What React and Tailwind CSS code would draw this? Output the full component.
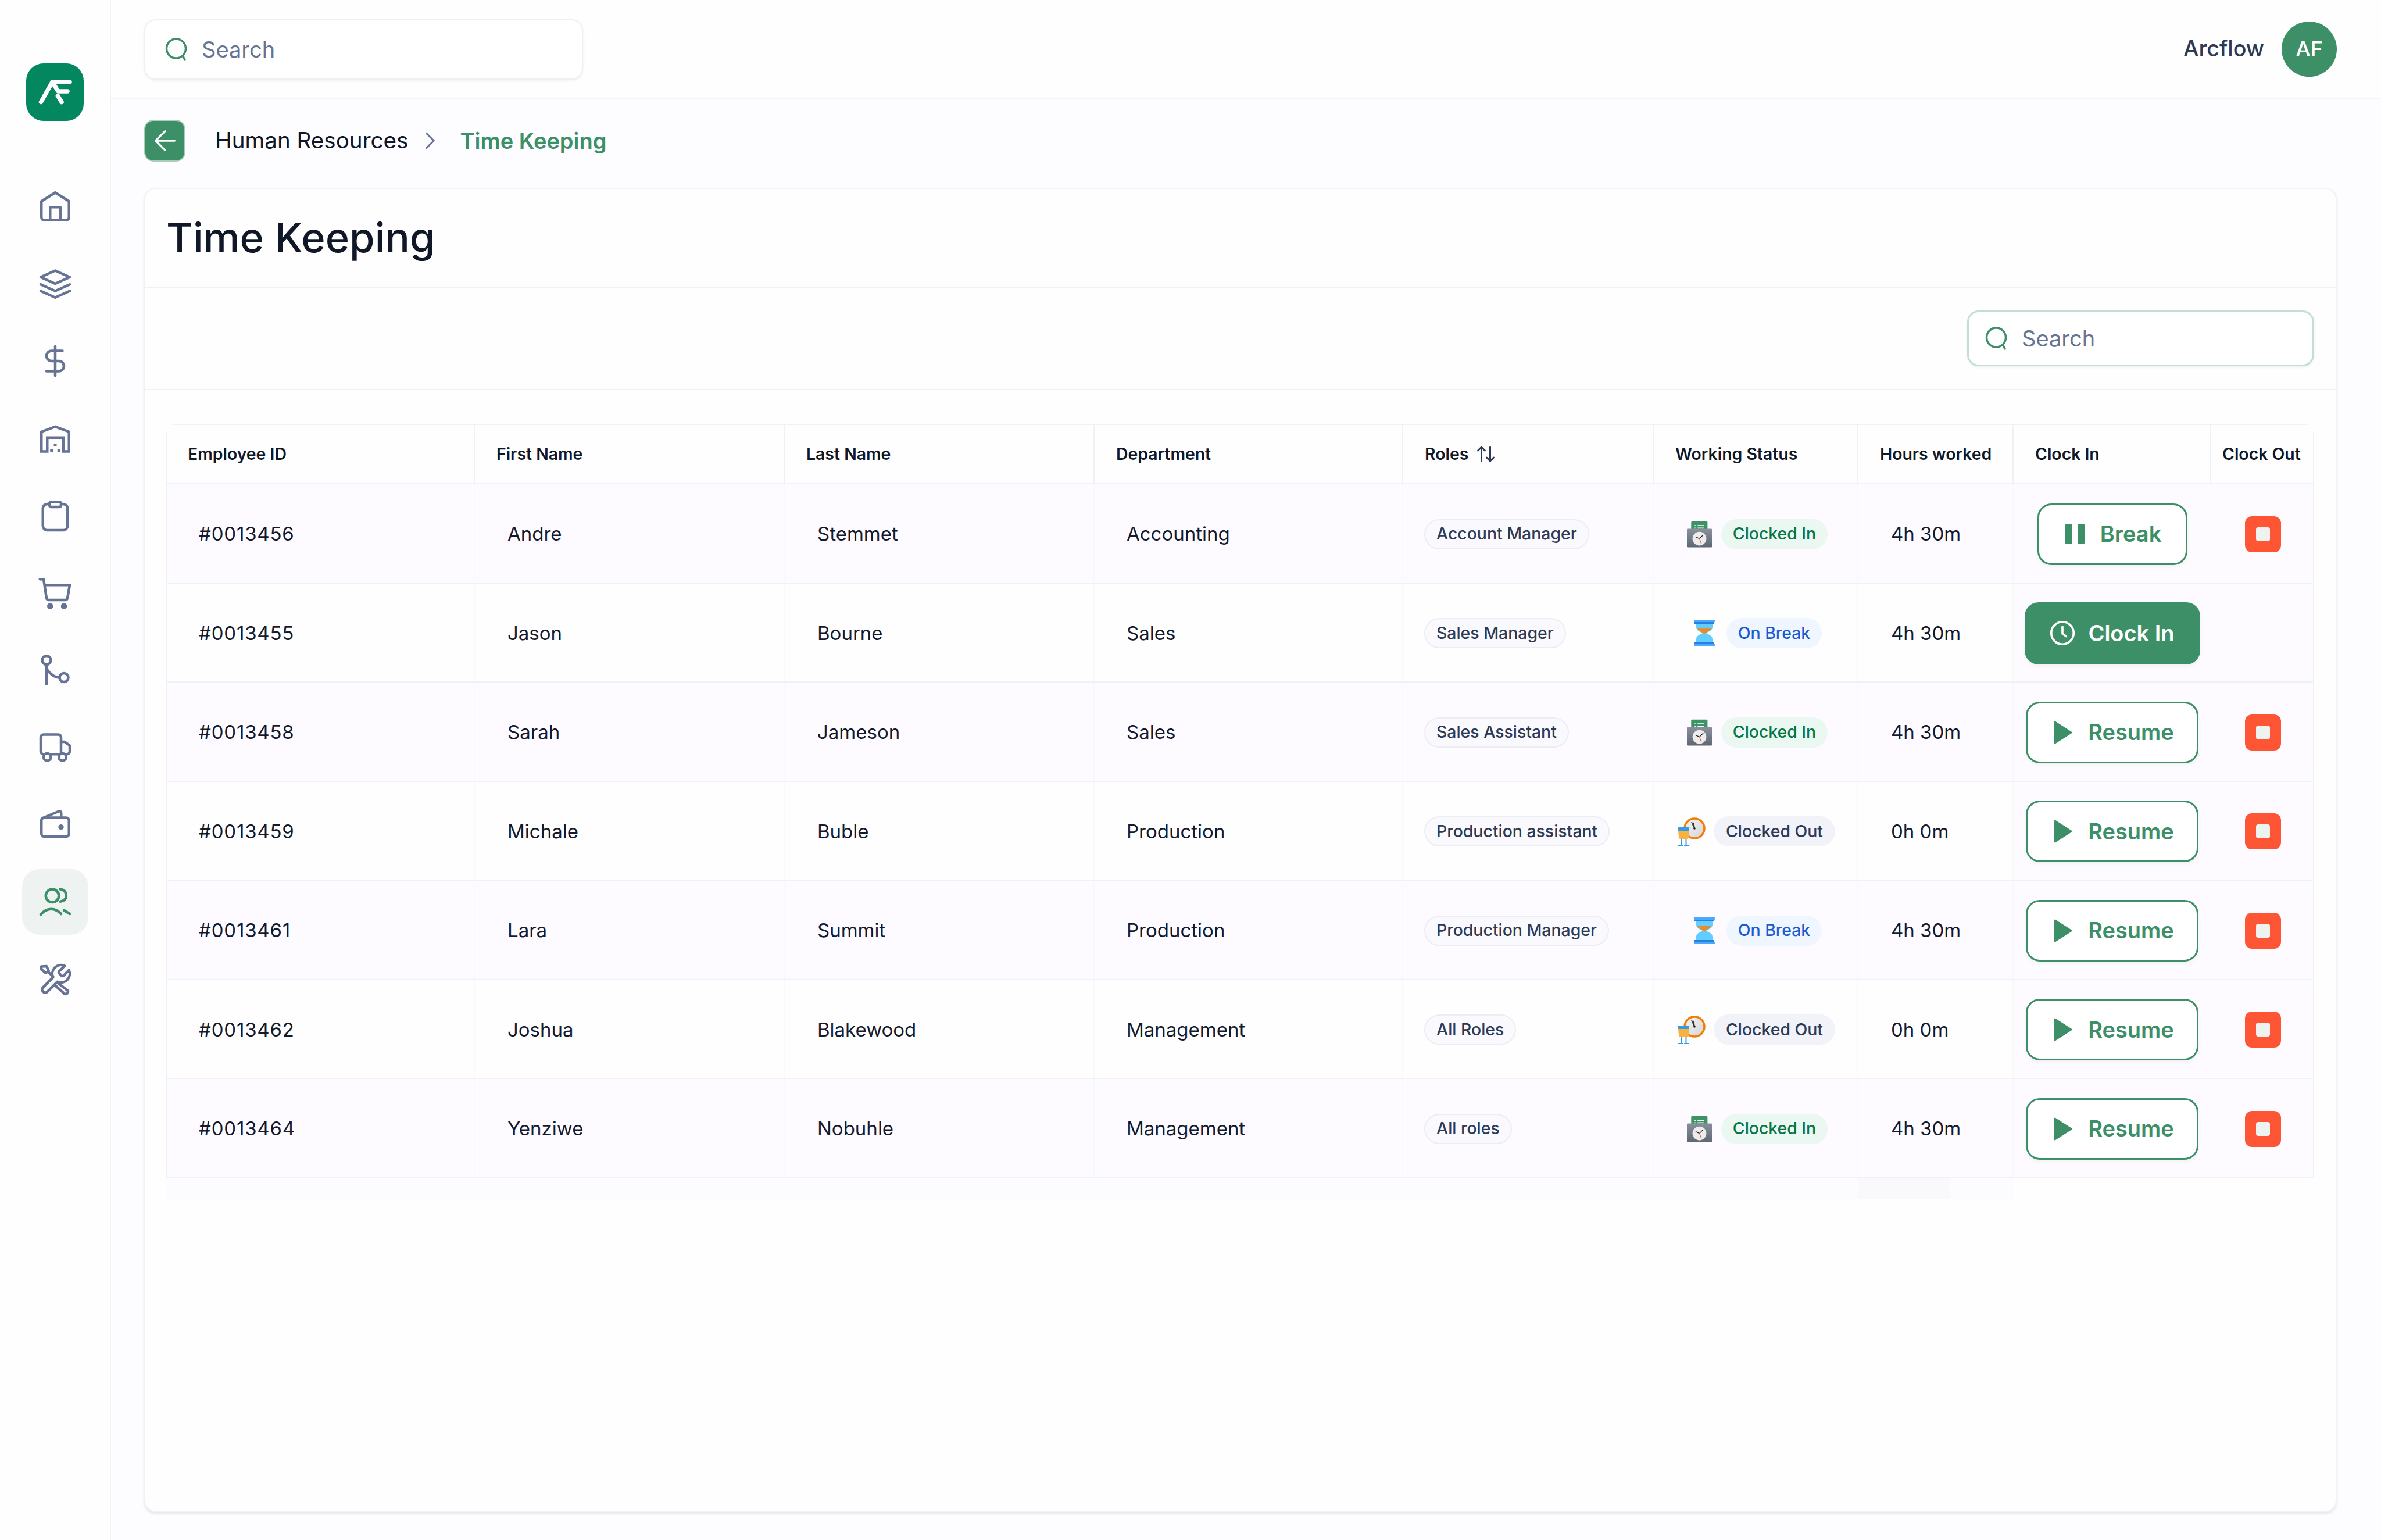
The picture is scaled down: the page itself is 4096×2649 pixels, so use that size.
import React from "react";
import { ArrowLeft, ChevronRight, ArrowUpDown, DollarSign } from "lucide-react";

const S = ({ children, cls = "text-[#667394]", w = 60, sw = 1.8 }) => (
  <svg width={w} height={w} viewBox="0 0 24 24" fill="none" stroke="currentColor" strokeWidth={sw} strokeLinecap="round" strokeLinejoin="round" className={cls}>{children}</svg>
);

const navIcons = [
  <S key="h"><path d="M2.5 8.5 L12 2.5 L21.5 8.5 V19.5 a2 2 0 0 1 -2 2 H4.5 a2 2 0 0 1 -2 -2 Z" /><path d="M8.5 21.5 V12.5 h7 V21.5" /></S>,
  <S key="l"><path d="M2 7.5 L12 3 L22 7.5 L12 12 Z" /><path d="M2 12.5 L12 17 L22 12.5" /><path d="M2 17 L12 21.5 L22 17" /></S>,
  <DollarSign key="d" size={60} strokeWidth={1.8} className="text-[#667394]" />,
  <S key="w"><path d="M2.5 21 V7.5 L12 4 L21.5 7.5 V21 H17.5 V11.5 H6.5 V21 Z" strokeLinejoin="miter" strokeLinecap="butt" /><path d="M11 16.5 h2 M8.5 20.5 h2 M13.5 20.5 h2" strokeLinecap="butt" strokeWidth="1.8" /></S>,
  <S key="c"><rect x="8" y="2.5" width="8" height="3.5" rx="1.2" /><path d="M8 4 H6.5 a3 3 0 0 0 -3 3 V19 a3 3 0 0 0 3 3 H17.5 a3 3 0 0 0 3 -3 V7 a3 3 0 0 0 -3 -3 H16" /></S>,
  <S key="s"><path d="M1.5 2.5 H4 L6 15.5 a1.5 1.5 0 0 0 1.5 1.3 H19 a1.5 1.5 0 0 0 1.4 -1.1 L22 6.5 H4.7" /><circle cx="8.5" cy="21" r="1.2" fill="currentColor" /><circle cx="18" cy="21" r="1.2" fill="currentColor" /></S>,
  <S key="r"><circle cx="6" cy="5" r="3" /><path d="M6 8 V21.5" /><path d="M6 11 C8.5 14.5 11.5 17 15 17" /><circle cx="18" cy="17" r="3" /></S>,
  <S key="t"><path d="M16 16.5 H4 a2 2 0 0 1 -2 -2 V5 a2 2 0 0 1 2 -2 H14 a2 2 0 0 1 2 2 Z" /><path d="M16 8 H18.5 L22 10.5 V14.5 a2 2 0 0 1 -2 2 H16" /><circle cx="6.5" cy="18.5" r="2.5" fill="#fff" /><circle cx="17" cy="18.5" r="2.5" fill="#fff" /></S>,
  <S key="wa"><rect x="2.5" y="7" width="19" height="13" rx="2" /><path d="M2.8 7.5 L14.5 2.6 a1.2 1.2 0 0 1 1.6 1.1 V7" /><circle cx="16" cy="13.5" r="1" fill="currentColor" /></S>,
  <S key="u" cls="text-[#3c8f66]"><circle cx="10" cy="7.5" r="4.5" /><path d="M2 20.5 C6 15.5 12 15.5 16 20" /><path d="M15.5 3 C18.5 3.5 19.5 5 19.5 7.5 C19.5 9.5 18.5 11 15.5 11.5" /><path d="M18 17.5 L22 20" /></S>,
  <S key="x"><path d="M14.7 6.3a1 1 0 0 0 0 1.4l1.6 1.6a1 1 0 0 0 1.4 0l3.77-3.77a6 6 0 0 1-7.94 7.94l-6.91 6.91a2.12 2.12 0 0 1-3-3l6.91-6.91a6 6 0 0 1 7.94-7.94l-3.76 3.76z" /><path d="M7 6.5 L10.5 10 M2.5 3 L6 2.8 L7.5 6 L5.5 7.5 L2.5 5 Z M14 14.5 L20.5 19.5 a1.6 1.6 0 0 1 -2.2 2.2 L12.5 16.5" /></S>,
];

const SearchIcon = () => (
  <svg width="39" height="40" viewBox="0 0 39 40" fill="none" stroke="#3c8f66" strokeWidth="3.5" strokeLinecap="round" className="shrink-0">
    <circle cx="19" cy="18.5" r="16.5" /><path d="M30.5 31 L34 38" />
  </svg>
);

const Logo = () => (
  <svg width="99" height="99" viewBox="15 14 99 99" className="rounded-[30px] bg-[#03875f]" fill="none" stroke="#fff" strokeWidth="7.5" strokeLinecap="round" strokeLinejoin="round">
    <path d="M40.5 80.5 L60 46 H90" />
    <path d="M60 46 L70 62 H86" />
    <path d="M69.5 70 L76 80.5" />
  </svg>
);

const ClockInIcon = () => (
  <svg width="43" height="46" viewBox="0 0 130 138" className="shrink-0">
    <defs><linearGradient id="cg" x1="0" y1="0" x2="0" y2="1"><stop offset="0" stopColor="#8a919c" /><stop offset="1" stopColor="#5f6773" /></linearGradient></defs>
    <rect x="22" y="2" width="85" height="50" rx="5" fill="#3c9466" />
    <path d="M55 24 H88 M55 37 H88 M40 24 H45 M40 37 H45" stroke="#fff" strokeWidth="5" />
    <rect x="0" y="40" width="130" height="97" rx="4" fill="url(#cg)" />
    <circle cx="65" cy="92" r="36" fill="#ececec" />
    <path d="M65 92 L85 72 M65 92 L45 82" stroke="#222" strokeWidth="4" />
    <path d="M65 92 L75 118" stroke="#f0673a" strokeWidth="4" />
  </svg>
);

const HourIcon = () => (
  <svg width="36" height="46" viewBox="0 0 36 46" className="shrink-0">
    <path d="M4 5 H32 V13 C32 19 24 21 21 23 C24 25 32 27 32 33 V41 H4 V33 C4 27 12 25 15 23 C12 21 4 19 4 13 Z" fill="#62cdff" />
    <path d="M6 15 H30 C29 19 22 20 18 25 C14 20 7 19 6 15 Z" fill="#e88d2d" />
    <rect x="0" y="0" width="36" height="4" rx="1" fill="#4aa8ff" />
    <rect x="1" y="4" width="34" height="3" fill="#2b7fe0" />
    <rect x="1" y="39" width="34" height="3" fill="#2b7fe0" />
    <rect x="0" y="42" width="36" height="4" rx="1" fill="#4aa8ff" />
  </svg>
);

const OutIcon = () => (
  <svg width="48" height="49" viewBox="0 0 48 49" className="shrink-0">
    <defs><linearGradient id="og" x1="0" y1="0" x2="1" y2="1"><stop offset="0" stopColor="#f4f4f4" /><stop offset="1" stopColor="#d4d4d8" /></linearGradient></defs>
    <circle cx="29" cy="19" r="17" fill="url(#og)" stroke="#f57c00" strokeWidth="3.5" />
    <path d="M29 19 L24 8 M29 19 L27.5 9" stroke="#333" strokeWidth="1.8" />
    <circle cx="29" cy="19" r="1.8" fill="#111" />
    <rect x="1" y="17" width="19" height="6" rx="1" fill="#2f9bea" />
    <path d="M1 23 H20 L19 34 a3 3 0 0 1 -3 3 H5 a3 3 0 0 1 -3 -3 Z" fill="#fbb040" />
    <path d="M6.5 37 V47 M14.5 37 V47" stroke="#2f9bea" strokeWidth="2" />
    <path d="M1 48 H10 M11 48 H20" stroke="#2f9bea" strokeWidth="2" />
  </svg>
);

const cols = "grid-cols-[530px_533px_533px_531px_431px_352px_267px_339px_176px]";

const rows = [
  ["#0013456", "Andre", "Stemmet", "Accounting", "Account Manager", "in", "4h 30m", "break"],
  ["#0013455", "Jason", "Bourne", "Sales", "Sales Manager", "onbreak", "4h 30m", "clock"],
  ["#0013458", "Sarah", "Jameson", "Sales", "Sales Assistant", "in", "4h 30m", "resume"],
  ["#0013459", "Michale", "Buble", "Production", "Production assistant", "out", "0h 0m", "resume"],
  ["#0013461", "Lara", "Summit", "Production", "Production Manager", "onbreak", "4h 30m", "resume"],
  ["#0013462", "Joshua", "Blakewood", "Management", "All Roles", "out", "0h 0m", "resume"],
  ["#0013464", "Yenziwe", "Nobuhle", "Management", "All roles", "in", "4h 30m", "resume"],
];

const Status = ({ s }) => {
  if (s === "in") return (
    <div className="flex items-center gap-[16px] pl-[6px]"><ClockInIcon /><span className="flex h-[52px] items-center rounded-full bg-[#ebf8f2] px-[20px] text-[28.4px] font-medium text-[#067647]">Clocked In</span></div>
  );
  if (s === "onbreak") return (
    <div className="flex items-center gap-[20px] pl-[8px]"><HourIcon /><span className="flex h-[52px] items-center rounded-full bg-[#eff6ff] px-[20px] text-[28.4px] font-medium text-[#175cd3]">On Break</span></div>
  );
  return (
    <div className="flex items-center gap-[14px] pl-[3px]"><OutIcon /><span className="flex h-[52px] items-center rounded-full bg-[#f2f3f8] px-[21px] text-[28.4px] font-medium text-[#2d3a55]">Clocked Out</span></div>
  );
};

const Action = ({ a }) => {
  if (a === "break") return (
    <button className="flex h-[106px] w-[258px] items-center justify-center gap-[27px] rounded-[24px] border-[3px] border-[#3c8f66] bg-white pl-[4px] text-[38px] font-semibold text-[#3c8f66] shadow-[0_3px_6px_#f0f0f4]">
      <span className="flex gap-[9px]"><span className="h-[35px] w-[12px] rounded-[2px] bg-[#3c8f66]" /><span className="h-[35px] w-[12px] rounded-[2px] bg-[#3c8f66]" /></span>Break
    </button>
  );
  if (a === "clock") return (
    <button className="flex h-[107px] w-[302px] items-center justify-center gap-[22px] rounded-[24px] bg-[#3c8f66] text-[38px] font-semibold text-white shadow-[0_3px_6px_#f0f0f4]">
      <svg width="44" height="44" viewBox="0 0 24 24" fill="none" stroke="#fff" strokeWidth="2" strokeLinecap="round" strokeLinejoin="round"><circle cx="12" cy="12" r="10.5" /><path d="M12 6 V12.5 L15.5 15" /></svg>Clock In
    </button>
  );
  return (
    <button className="flex h-[106px] w-[297px] items-center justify-center gap-[27px] rounded-[24px] border-[3px] border-[#3c8f66] bg-white pl-[6px] text-[38px] font-semibold text-[#3c8f66] shadow-[0_3px_6px_#f0f0f4]">
      <svg width="32" height="40" viewBox="0 0 32 40"><path d="M2 2 L30 20 L2 38 Z" fill="#3c8f66" stroke="#3c8f66" strokeWidth="3" strokeLinejoin="round" /></svg>Resume
    </button>
  );
};

const Stop = () => (
  <button className="ml-[4px] flex h-[62px] w-[62px] items-center justify-center rounded-[12px] bg-[#fe5535]"><span className="h-[24px] w-[24px] rounded-[4px] bg-[#eef3f0]" /></button>
);

const Head = ({ children, last, pl = "pl-[37px]" }) => (
  <div className={`flex h-full items-center ${pl} text-[28.4px] font-semibold text-[#101828] ${last ? "" : "border-r-2 border-[#f0f0f6]"}`}>{children}</div>
);

export default function App() {
  return (
    <div className="flex h-[2649px] w-[4096px] bg-[#fdfcfe] text-[#101828] [font-family:Inter,sans-serif]">
      <aside className="flex w-[191px] shrink-0 flex-col items-center border-r-2 border-[#f3f2f8] bg-[#fefefe] pt-[109px]">
        <Logo />
        <nav className="mt-[90px] flex flex-col items-center gap-[20px]">
          {navIcons.map((ic, i) => (
            <div key={i} className={`flex h-[113px] w-[114px] items-center justify-center rounded-[30px] ${i === 9 ? "bg-[#eef3f2]" : ""}`}>{ic}</div>
          ))}
        </nav>
      </aside>
      <div className="flex min-w-0 flex-1 flex-col">
        <header className="flex h-[170px] shrink-0 items-center justify-between border-b-2 border-[#f5f4f8] bg-[#fefefe] pl-[57px] pr-[76px]">
          <div className="mt-[2px] flex h-[104px] w-[755px] items-center gap-[24px] rounded-[20px] border-2 border-[#eff0f4] bg-white pl-[34px] shadow-[0_2px_4px_#f0f0f4]">
            <SearchIcon /><span className="text-[38px] text-[#667394]">Search</span>
          </div>
          <div className="flex items-center gap-[30px]">
            <span className="text-[37.6px] font-medium text-[#2d3a55]">Arcflow</span>
            <span className="flex h-[95px] w-[95px] items-center justify-center rounded-full bg-[#3c8f66] text-[36px] font-medium text-white">AF</span>
          </div>
        </header>
        <main className="flex min-h-0 flex-1 flex-col pb-[48px] pl-[57px] pr-[76px]">
          <div className="flex h-[153px] shrink-0 items-start pt-[36px]">
            <span className="flex h-[72px] w-[71px] items-center justify-center rounded-[16px] border-2 border-[#a9cdb9] bg-[#3c8f66]"><ArrowLeft size={56} strokeWidth={1.4} className="text-white" /></span>
            <span className="ml-[51px] flex h-[72px] items-center text-[38.6px] font-normal text-[#101828]">Human Resources</span>
            <span className="ml-[13px] mr-[26px] flex h-[72px] items-center"><ChevronRight size={50} strokeWidth={1.5} className="text-[#667394]" /></span>
            <span className="flex h-[72px] items-center text-[38px] font-semibold text-[#3c8f66]">Time Keeping</span>
          </div>
          <section className="flex min-h-0 flex-1 flex-col rounded-[20px] border-2 border-[#f2f2f6] bg-[#fefefe] shadow-[0_3px_4px_#e4e6ee]">
            <div className="flex h-[170px] shrink-0 items-center border-b-2 border-[#f0f0f5] pl-[36px]">
              <h1 className="text-[70.5px] font-medium text-[#101828]">Time Keeping</h1>
            </div>
            <div className="flex h-[176px] shrink-0 items-center justify-end border-b-2 border-[#f0f0f5] pr-[37px]">
              <div className="flex h-[96px] w-[597px] items-center gap-[24px] rounded-[20px] border-[3px] border-[#c4dfd1] bg-white pl-[28px] shadow-[0_2px_4px_#f0f0f4]">
                <SearchIcon /><span className="text-[38px] text-[#667394]">Search</span>
              </div>
            </div>
            <div className="pl-[35px] pr-[37px] pt-[58px]">
              <div className="w-[3696px] rounded-t-[20px] border-x-2 border-t-2 border-[#f0f0f6]">
                <div className={`grid h-[102px] ${cols} border-b-2 border-[#f0f0f6] bg-[#fefefe]`}>
                  <Head pl="pl-[36px]">Employee ID</Head>
                  <Head>First Name</Head>
                  <Head>Last Name</Head>
                  <Head>Department</Head>
                  <Head><span className="flex items-center gap-[12px]">Roles<ArrowUpDown size={36} strokeWidth={2} className="text-[#2d3a55]" /></span></Head>
                  <Head>Working Status</Head>
                  <Head>Hours worked</Head>
                  <Head>Clock In</Head>
                  <Head last pl="pl-[20px]">Clock Out</Head>
                </div>
                {rows.map((r, i) => {
                  const bg = i % 2 === 0 ? "bg-[#fdfbff]" : "bg-[#fefefe]";
                  const cell = `flex h-full items-center border-r-2 border-[#f9f8fb] pt-[3px] ${bg}`;
                  return (
                    <div key={i} className={`grid h-[170.5px] ${cols} border-b-2 border-[#f0f0f6] text-[33px] text-[#131a2e]`}>
                      <div className={`${cell} pl-[55px] tracking-[0.8px]`}>{r[0]}</div>
                      <div className={`${cell} pl-[56px]`}>{r[1]}</div>
                      <div className={`${cell} pl-[56px]`}>{r[2]}</div>
                      <div className={`${cell} pl-[55px]`}>{r[3]}</div>
                      <div className={`${cell} pl-[36px]`}>
                        <span className="flex h-[52px] items-center rounded-full border-2 border-[#ecedf3] bg-[#f9f9fe] px-[19px] text-[28.4px] font-medium text-[#2d3a55]">{r[4]}</span>
                      </div>
                      <div className={`${cell} justify-center`}><Status s={r[5]} /></div>
                      <div className={`${cell} pl-[56px]`}>{r[6]}</div>
                      <div className="flex h-full items-center justify-center bg-[#fdfbff] pt-[3px]"><Action a={r[7]} /></div>
                      <div className="flex h-full items-center justify-center bg-[#fdfbff] pt-[3px]">{r[7] !== "clock" && <Stop />}</div>
                    </div>
                  );
                })}
              </div>
              <div className="flex h-[36px] w-[3180px]">
                <div className="w-[2911px] bg-[#fcfbfe]" />
                <div className="w-[159px] bg-[#f9f8fb]" />
                <div className="w-[110px] bg-[#fcfbfe]" />
              </div>
            </div>
          </section>
        </main>
      </div>
    </div>
  );
}
